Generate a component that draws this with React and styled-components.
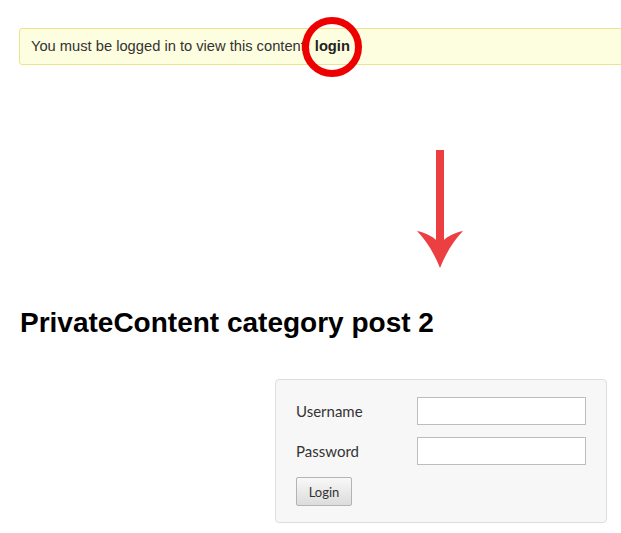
import React from 'react';
import styled, { createGlobalStyle } from 'styled-components';

const GlobalStyle = createGlobalStyle`
	html, body {
		margin: 0;
		padding: 0;
		background: #fff;
		overflow: hidden;
	}
	body {
		font-family: 'Liberation Sans', Arial, sans-serif;
		color: #333;
	}
	* {
		box-sizing: border-box;
	}
`;

const Page = styled.div`
	width: 621px;
	height: 533px;
	padding: 28px 0 0 19px;
`;

const Notice = styled.div`
	margin-right: -20px;
	height: 37px;
	padding: 9px 11px;
	background: #fdfddf;
	border: 1px solid #ece48e;
	border-radius: 3px;
	font-size: 14.7px;
	line-height: 17px;
	color: #333;
	white-space: nowrap;
`;

const LoginLink = styled.a`
	position: relative;
	margin-left: 10px;
	font-weight: bold;
	color: #222;
	text-decoration: none;

	&::after {
		content: '';
		position: absolute;
		left: 50%;
		top: 50%;
		width: 60px;
		height: 60px;
		margin: -29px 0 0 -30px;
		border: 7px solid #ee0000;
		border-radius: 50%;
		box-sizing: border-box;
	}
`;

const ArrowRow = styled.div`
	padding: 83px 0 0 396px;
	height: 205px;
`;

const Title = styled.h1`
	margin: 37px 0 0 1px;
	font-family: 'Liberation Sans', Arial, sans-serif;
	font-size: 28px;
	line-height: 32px;
	font-weight: bold;
	color: #000;
`;

const FormBox = styled.form`
	margin: 40px 0 0 256px;
	width: 332px;
	height: 144px;
	padding: 17px 20px 16px 20px;
	background: #f7f7f7;
	border: 1px solid #dedede;
	border-radius: 4px;
	font-family: Lato, 'Open Sans', sans-serif;
`;

const Field = styled.div`
	display: grid;
	grid-template-columns: 121px 169px;
	align-items: center;
	margin-bottom: 12px;
`;

const Label = styled.label`
	font-size: 15px;
	color: #333;
`;

const Input = styled.input`
	width: 169px;
	height: 28px;
	margin: 0;
	border: 1px solid #bdbdbd;
	background: #fff;
	border-radius: 0;
`;

const Button = styled.button`
	width: 56px;
	height: 29px;
	padding: 0;
	font-family: Lato, 'Open Sans', sans-serif;
	font-size: 13px;
	color: #333;
	background: linear-gradient(#f8f8f8, #dcdcdc);
	border: 1px solid #b4b4b4;
	border-radius: 2px;
`;

const DownArrow = () => (
	<svg width="50" height="122" viewBox="0 0 50 122">
		<rect x="21" y="2" width="8" height="94" fill="#ec3f42" />
		<path
			d="M25 120 C19 105 11 92 2 83 C12 85 19 89 25 96 C31 89 38 85 48 83 C39 92 31 105 25 120 Z"
			fill="#ec3f42"
		/>
	</svg>
);

export default function App() {
	return (
		<Page>
			<GlobalStyle />
			<Notice>
				You must be logged in to view this content
				<LoginLink href="#">login</LoginLink>
			</Notice>

			<ArrowRow>
				<DownArrow />
			</ArrowRow>

			<Title>PrivateContent category post 2</Title>

			<FormBox onSubmit={(e) => e.preventDefault()}>
				<Field>
					<Label>Username</Label>
					<Input type="text" />
				</Field>
				<Field>
					<Label>Password</Label>
					<Input type="password" />
				</Field>
				<Button type="submit">Login</Button>
			</FormBox>
		</Page>
	);
}
